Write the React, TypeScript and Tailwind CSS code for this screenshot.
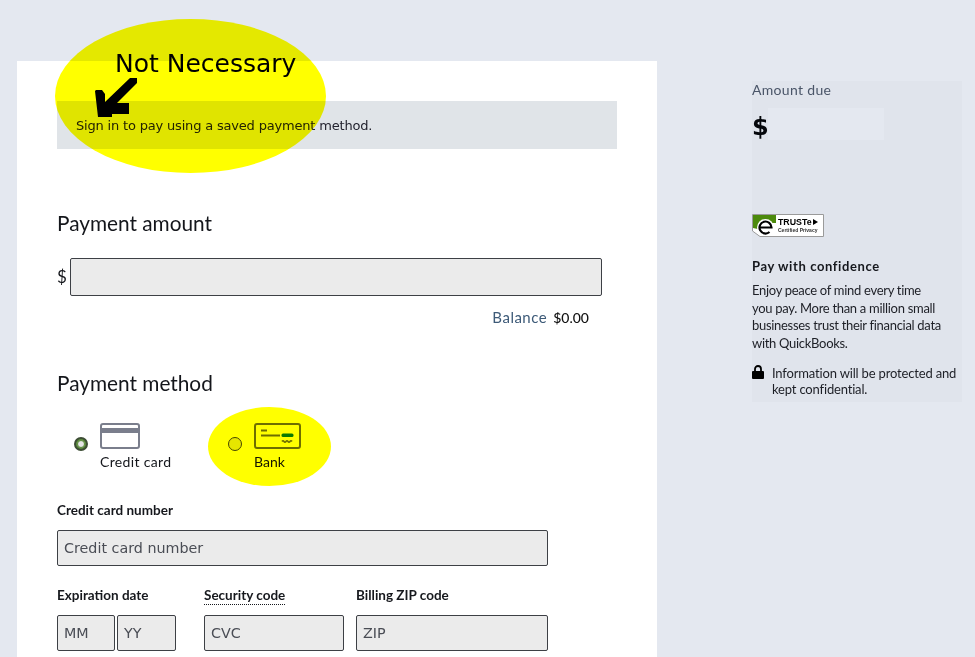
const dejavu = "font-['DejaVu_Sans',sans-serif]";
const soft = "font-['Lato',sans-serif]";

function Field({ text, className }: { text?: string; className: string }) {
  return (
    <div
      className={`flex items-center rounded-[2px] border border-[#3d4045] bg-[#ebebeb] pl-[6px] pt-[1px] text-[14.3px] text-[#4a4d55] ${dejavu} ${className}`}
    >
      {text}
    </div>
  );
}

function TrusteBadge() {
  return (
    <svg width="72" height="23" viewBox="0 0 72 23" className="block">
      <path d="M0.5 0.5H71.5V22.5H8L0.5 17Z" fill="#fff" stroke="#9a9a9a" />
      <path d="M1 1H24V9H1Z" fill="#4c8a0c" />
      <path d="M1 9H8V15.500L1 14Z" fill="#4c8a0c" />
      <circle cx="13.500" cy="13.500" r="8.500" fill="#fff" />
      <path d="M8 13.500H19.500A6 6 0 1 0 17.500 18" fill="none" stroke="#000" strokeWidth="2.200" />
      <text x="26" y="11" fontSize="8.800" fontWeight="700" fontFamily="Liberation Sans" fill="#000">
        TRUSTe
      </text>
      <path d="M61 5L66 8L61 11Z" fill="#000" />
      <text x="26" y="18" fontSize="5" fontWeight="700" fontFamily="Liberation Sans" fill="#333">
        Certified Privacy
      </text>
    </svg>
  );
}

export default function App() {
  return (
    <div className={`relative h-[657px] w-[975px] overflow-hidden bg-[#e4e8f0] ${soft}`}>
      <div className="flex items-start pl-[17px] pt-[61px]">
        <main className="h-[596px] w-[640px] shrink-0 bg-white pl-[40px] pt-[40px]">
          <div className={`flex h-[48px] w-[560px] items-center bg-[#e0e4e8] pl-[19px] pt-[1px] text-[13px] tracking-[-0.18px] text-[#23232f] ${dejavu}`}>
            Sign in to pay using a saved payment method.
          </div>

          <h2 className="mt-[61px] text-[20.8px] leading-[26px] text-[#14161b]">Payment amount</h2>
          <div className="mt-[22px] flex items-center">
            <span className="w-[13px] text-[17px] text-[#14161b]">$</span>
            <Field className="h-[38px] w-[532px]" />
          </div>
          <div className="mt-[11px] flex w-[532px] items-baseline justify-end gap-[6px] leading-[20px]">
            <span className="text-[15px] tracking-[0.5px] text-[#3d5a78]">Balance</span>
            <span className="text-[14px] font-medium text-[#111]">$0.00</span>
          </div>

          <h2 className="mt-[42px] text-[20.8px] leading-[26px] text-[#14161b]">Payment method</h2>
          <div className="mt-[27px] flex items-start pl-[17px]">
            <span className="mt-[14px] flex h-[14px] w-[14px] items-center justify-center rounded-full border-2 border-[#3c4c34] bg-[#5b8a3c]">
              <span className="h-[8px] w-[8px] rounded-full border border-[#5b8a3c] bg-[#e5e5e5]" />
            </span>
            <div className="ml-[12px] flex w-[72px] flex-col">
              <svg width="40" height="26" viewBox="0 0 40 26" className="block">
                <rect x="1" y="1" width="38" height="24" rx="2" fill="#fff" stroke="#7a7e8c" strokeWidth="2" />
                <rect x="1" y="5" width="38" height="5" fill="#7a7e8c" />
              </svg>
              <span className="mt-[3px] whitespace-nowrap text-[14px] leading-[20px] tracking-[0.35px] text-[#14161b]">Credit card</span>
            </div>
            <span className="ml-[56px] mt-[14px] h-[14px] w-[14px] rounded-full border border-[#46461e] bg-[#e6e600]" />
            <div className="ml-[12px] flex flex-col">
              <svg width="47" height="26" viewBox="0 0 47 26" className="block">
                <rect x="1" y="1" width="45" height="24" rx="2" fill="#fff" stroke="#6e6e00" strokeWidth="2" />
                <path d="M7 7.500H13M7 12.500H26" stroke="#6e6e00" strokeWidth="2" />
                <rect x="27.500" y="10.500" width="12" height="3.500" rx="1.500" fill="#0a7a0a" />
                <path d="M28 18.500q1-1.500 2 0t2 0t2 0t2 0t2 0" fill="none" stroke="#6e6e00" strokeWidth="1.600" />
              </svg>
              <span className="mt-[3px] text-[14px] leading-[20px] text-[#14161b]">Bank</span>
            </div>
          </div>

          <label className="mt-[29px] block text-[13.5px] font-bold leading-[18px] text-[#16181d]">Credit card number</label>
          <Field text="Credit card number" className="mt-[11px] h-[36px] w-[491px]" />

          <div className="mt-[20px] flex">
            <div className="w-[147px]">
              <label className="block text-[13.5px] font-bold leading-[18px] text-[#16181d]">Expiration date</label>
              <div className="mt-[11px] flex gap-[2px]">
                <Field text="MM" className="h-[36px] w-[58px]" />
                <Field text="YY" className="h-[36px] w-[59px]" />
              </div>
            </div>
            <div className="w-[152px]">
              <label className="block w-fit border-b border-dotted border-[#16181d] text-[13.5px] font-bold leading-[18px] text-[#16181d]">
                Security code
              </label>
              <Field text="CVC" className="mt-[10px] h-[36px] w-[140px]" />
            </div>
            <div>
              <label className="block text-[13.5px] font-bold leading-[18px] text-[#16181d]">Billing ZIP code</label>
              <Field text="ZIP" className="mt-[11px] h-[36px] w-[192px]" />
            </div>
          </div>
        </main>

        <aside className="ml-[95px] mt-[20px] h-[321px] w-[210px] shrink-0 bg-[#e0e4ec]">
          <p className="text-[14px] leading-[18px] tracking-[0.32px] text-[#4a5568]">Amount due</p>
          <div className="mt-[9px] flex h-[32px] items-start">
            <span className={`mt-[3px] w-[16px] text-[24px] font-bold leading-[32px] text-[#05070c] ${dejavu}`}>$</span>
            <span className="h-[32px] w-[116px] bg-[#e4e8f0]" />
          </div>
          <div className="mt-[74px]">
            <TrusteBadge />
          </div>
          <h3 className="mt-[20px] text-[13px] font-bold leading-[18px] tracking-[0.6px] text-[#16181d]">Pay with confidence</h3>
          <p className="mt-[7px] text-[13px] leading-[17.5px] tracking-[-0.3px] text-[#1d1f26]">
            Enjoy peace of mind every time
            <br />
            you pay. More than a million small
            <br />
            businesses trust their financial data
            <br />
            with QuickBooks.
          </p>
          <div className="mt-[13px] flex">
            <svg width="12" height="14" viewBox="0 0 12 14" className="shrink-0">
              <path d="M3 6V4a3 3 0 0 1 6 0v2" fill="none" stroke="#000" strokeWidth="1.800" />
              <rect x="0" y="6" width="12" height="8" rx="1" fill="#000" />
            </svg>
            <p className="ml-[8px] text-[13px] leading-[16px] tracking-[-0.17px] text-[#1d1f26]">
              Information will be protected and kept confidential.
            </p>
          </div>
        </aside>
      </div>

      {/* highlighter marks drawn over the page */}
      <div className="absolute left-[55px] top-[19px] h-[154px] w-[271px] rounded-[50%] bg-[#ffff00] mix-blend-multiply" />
      <div className="absolute left-[208px] top-[407px] h-[79px] w-[123px] rounded-[50%] bg-[#ffff00] mix-blend-multiply" />
      <span className={`absolute left-[115px] top-[48px] text-[25px] leading-[32px] text-black ${dejavu}`}>Not Necessary</span>
      <svg width="46" height="42" viewBox="0 0 46 42" className="absolute left-[94px] top-[77px]">
        <path d="M1 14L2 13H8L11 17L11 25L36 1H43V6L23 26H35L35 37L18 37V40H4Z" fill="#000" />
      </svg>
    </div>
  );
}
